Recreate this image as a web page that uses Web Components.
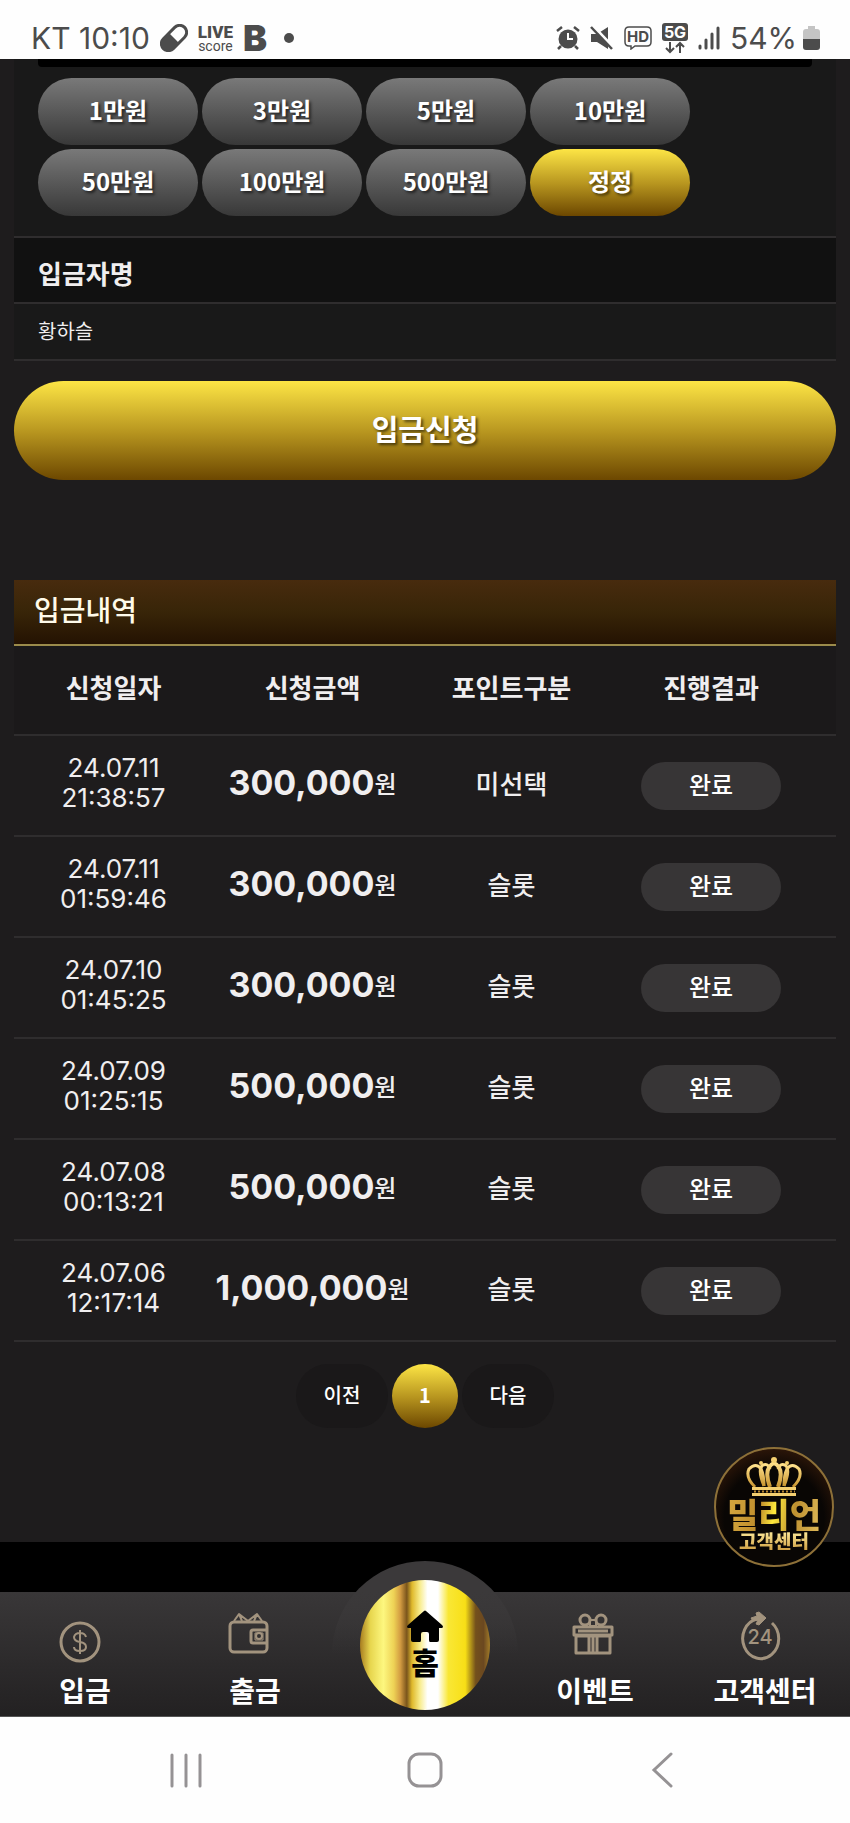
<!DOCTYPE html>
<html lang="ko">
<head>
<meta charset="utf-8">
<meta name="viewport" content="width=device-width, initial-scale=1">
<title>입금신청</title>
<style>
  :root {
    --font-kr: "Noto Sans CJK KR", sans-serif;
    --font-system: Inter, Roboto, sans-serif;
    --bg: #1e1c1d;
    --panel: #191919;
    --line: #2f2d2e;
    --gold: linear-gradient(#fde545, #b7951f 52%, #6c4700);
    --shadow: 2px 2px 3px #0009;
    --side: 14px;
  }

  body {
    margin: 0;
    background: #fefefe;
    font-family: var(--font-kr);
    color: #f0eeef;
  }
</style>
</head>
<body>
<app-screen>
  <status-bar slot="top"></status-bar>

  <deposit-form name="황하슬">
    <amount-chip>1만원</amount-chip>
    <amount-chip>3만원</amount-chip>
    <amount-chip>5만원</amount-chip>
    <amount-chip>10만원</amount-chip>
    <amount-chip>50만원</amount-chip>
    <amount-chip>100만원</amount-chip>
    <amount-chip>500만원</amount-chip>
    <amount-chip gold>정정</amount-chip>
  </deposit-form>
  <deposit-history></deposit-history>
  <page-nav></page-nav>

  <support-badge slot="float"></support-badge>
  <tab-bar slot="bottom">
    <tab-item icon="coin">입금</tab-item>
    <tab-item icon="wallet">출금</tab-item>
    <home-tab>홈</home-tab>
    <tab-item icon="gift">이벤트</tab-item>
    <tab-item icon="support">고객센터</tab-item>
  </tab-bar>
  <system-nav slot="bottom"></system-nav>
</app-screen>

<script>
class BaseElement extends HTMLElement {
  constructor() {
    super();
    this.attachShadow({ mode: "open" });
  }

  connectedCallback() {
    this.shadowRoot.innerHTML = `<style>
      * { box-sizing: border-box; }
      button, input { font-family: inherit; color: inherit; border: 0; margin: 0; padding: 0; }
      svg { display: block; }
      ${this.constructor.styles}
    </style>${this.render()}`;
  }
}

class AppScreen extends BaseElement {
  static get styles() {
    return /* css */`
      :host {
        display: flex;
        flex-direction: column;
        min-height: 100vh;
        position: relative;
      }

      main {
        flex: 1;
        background: var(--bg);
        padding: 0 var(--side) 114px;
      }

      .gap {
        height: 50px;
        background: #000;
      }
    `;
  }

  render() {
    return /* html */`
      <slot name="top"></slot>
      <main><slot></slot></main>
      <div class="gap"></div>
      <slot name="bottom"></slot>
      <slot name="float"></slot>`;
  }
}

class StatusBar extends BaseElement {
  static get styles() {
    return /* css */`
      :host {
        display: flex;
        justify-content: space-between;
        height: 59px;
        padding: 16px 30px 0 31px;
        box-sizing: border-box;
        background: #fefefe;
        color: #4c4c4c;
        font: 400 30px/42px var(--font-system);
      }

      .group {
        display: flex;
        align-items: center;
        gap: 10px;
      }

      .battery {
        display: flex;
        align-items: center;
        gap: 6px;
      }

      .live {
        font: 900 17px/16px Roboto, sans-serif;
        text-align: center;

        & small {
          display: block;
          font: 400 14px/12px Roboto, sans-serif;
        }
      }

      .b {
        font: 900 36px/42px Inter, sans-serif;
      }

      .dot {
        width: 10px;
        height: 10px;
        border-radius: 50%;
        background: currentColor;
        margin-left: 7px;
      }

      svg text {
        font-family: Inter, sans-serif;
        font-weight: 700;
      }
    `;
  }

  render() {
    return /* html */`
      <div class="group">
        <span>KT 10:10</span>
        <svg width="28" height="28" viewBox="0 0 28 28" aria-hidden="true">
          <g transform="rotate(-45 14 14)">
            <rect x="-1" y="7" width="30" height="14" rx="7" fill="none" stroke="#4c4c4c" stroke-width="3"/>
            <path d="M14 7H6a7 7 0 0 0 0 14h8z" fill="#4c4c4c"/>
          </g>
        </svg>
        <span class="live">LIVE<small>score</small></span>
        <span class="b">B</span>
        <span class="dot"></span>
      </div>
      <div class="group">
        <svg width="24" height="24" viewBox="0 0 24 24" fill="none" stroke="#4c4c4c" aria-hidden="true">
          <circle cx="12" cy="13" r="9.500" fill="#4c4c4c" stroke="none"/>
          <path d="M1 5l5-4M23 5l-5-4M5 20l-3 3M19 20l3 3" stroke-width="2.500"/>
          <path d="M12 7v6h5" stroke="#fff" stroke-width="2"/>
        </svg>
        <svg width="24" height="24" viewBox="0 0 24 24" aria-hidden="true">
          <path d="M1 8h6L18 1v22L7 16H1z" fill="#4c4c4c"/>
          <path d="M4 1l20 21" stroke="#fefefe" stroke-width="3"/>
          <path d="M1 1l21 22" stroke="#4c4c4c" stroke-width="2.500"/>
        </svg>
        <svg width="28" height="24" viewBox="0 0 28 24" aria-hidden="true">
          <path d="M5 1h18q4 0 4 4v11q0 4-4 4H11l-4 3v-3H5q-4 0-4-4V5q0-4 4-4z" fill="none" stroke="#4c4c4c" stroke-width="1.500"/>
          <text x="14" y="16" font-size="15" text-anchor="middle" fill="#4c4c4c">HD</text>
        </svg>
        <svg width="26" height="32" viewBox="0 0 26 32" aria-hidden="true">
          <rect width="26" height="18" rx="3" fill="#4c4c4c" y="1"/>
          <text x="13" y="16" font-size="16" text-anchor="middle" fill="#fff">5G</text>
          <path d="M8 20v10M4 26l4 4 4-4M18 31V21M14 25l4-4 4 4" fill="none" stroke="#4c4c4c" stroke-width="2"/>
        </svg>
        <svg width="22" height="24" viewBox="0 0 22 24" stroke="#4c4c4c" stroke-width="3" stroke-linecap="round" aria-hidden="true">
          <path d="M2 20v2M8 14v8M14 8v14M20 2v20"/>
        </svg>
        <div class="battery">
          <span>54%</span>
          <svg width="17" height="26" viewBox="0 0 17 26" aria-hidden="true">
            <path d="M5 1h7v3h2q3 0 3 3v7H0V7q0-3 3-3h2z" fill="#c4c4c4"/>
            <path d="M0 14h17v8q0 3-3 3H3q-3 0-3-3z" fill="#4c4c4c"/>
          </svg>
        </div>
      </div>`;
  }
}

class AmountChip extends BaseElement {
  static get styles() {
    return /* css */`
      :host {
        display: block;
      }

      button {
        width: 100%;
        height: 67px;
        border-radius: 34px;
        padding-bottom: 4px;
        background: linear-gradient(#797979, #383838);
        color: #fff;
        font-size: 24px;
        font-weight: 700;
        line-height: 32px;
        text-shadow: var(--shadow);
      }

      :host([gold]) button {
        background: var(--gold);
      }
    `;
  }

  render() {
    return /* html */`<button type="button"><slot></slot></button>`;
  }
}

class DepositForm extends BaseElement {
  static get styles() {
    return /* css */`
      :host {
        display: block;
      }

      .panel {
        background: var(--panel);
        border-bottom: 2px solid var(--line);
      }

      .amounts {
        padding: 0 24px 20px;
      }

      .field {
        height: 8px;
        border-radius: 0 0 4px 4px;
        background: #000;
      }

      .chips {
        display: grid;
        grid-template-columns: repeat(4, minmax(0, 160px));
        gap: 4px;
        margin-top: 11px;
      }

      label {
        display: block;
        padding: 17px 24px 11px;
        background: #111;
        font-size: 26px;
        font-weight: 700;
        line-height: 36px;
      }

      input {
        display: block;
        width: 100%;
        height: 55px;
        padding: 0 24px 2px;
        background: none;
        font-size: 20px;
      }

      .submit {
        display: block;
        width: 100%;
        height: 99px;
        margin-top: 20px;
        padding-bottom: 6px;
        border-radius: 50px;
        background: var(--gold);
        color: #fff;
        font-size: 29px;
        font-weight: 700;
        text-shadow: var(--shadow);
      }
    `;
  }

  render() {
    return /* html */`
      <form>
        <div class="panel amounts">
          <div class="field"></div>
          <div class="chips"><slot></slot></div>
        </div>
        <div class="panel"><label for="name">입금자명</label></div>
        <div class="panel"><input id="name" value="${this.getAttribute("name")}"></div>
        <button class="submit" type="button">입금신청</button>
      </form>`;
  }
}

const deposits = [
  ["24.07.11", "21:38:57", "300,000", "미선택"],
  ["24.07.11", "01:59:46", "300,000", "슬롯"],
  ["24.07.10", "01:45:25", "300,000", "슬롯"],
  ["24.07.09", "01:25:15", "500,000", "슬롯"],
  ["24.07.08", "00:13:21", "500,000", "슬롯"],
  ["24.07.06", "12:17:14", "1,000,000", "슬롯"],
];

class DepositHistory extends BaseElement {
  static get styles() {
    return /* css */`
      :host {
        display: block;
        margin-top: 100px;
      }

      h2 {
        margin: 0;
        padding: 9px 20px 15px;
        background: linear-gradient(#482b0e, #382508 50%, #241202);
        border-bottom: 2px solid #9b8b4b;
        color: #fffbea;
        font-size: 28px;
        font-weight: 500;
        line-height: 40px;
      }

      table {
        width: 100%;
        border-collapse: collapse;
        table-layout: fixed;
        font-size: 26px;
      }

      th, td {
        padding: 0;
        border-bottom: 2px solid var(--line);
        text-align: center;
        font-weight: 500;
      }

      th {
        height: 89px;
        padding-bottom: 8px;
        background: #1b191a;
        font-weight: 700;
      }

      td {
        height: 101px;
        padding-bottom: 6px;
        line-height: 36px;
      }

      /* the last column also takes the right gutter of the table */
      th:last-child, td:last-child {
        width: 225px;
        padding-right: 25px;
      }

      td:last-child {
        padding-bottom: 0;
      }

      time {
        font-family: Inter, sans-serif;
        font-size: 26px;
        font-weight: 400;
        line-height: 30px;
      }

      time span {
        display: block;
      }

      .amount {
        display: flex;
        justify-content: center;
        align-items: center;
        font-size: 24px;
        white-space: nowrap;
      }

      b {
        font-family: Inter, sans-serif;
        font-size: 34px;
      }

      .state {
        display: inline-block;
        width: 140px;
        padding: 4px 0 8px;
        border-radius: 24px;
        background: #373536;
        color: #fff;
        font-size: 24px;
        vertical-align: middle;
      }
    `;
  }

  render() {
    const rows = deposits.map(([date, hour, amount, point]) => `
      <tr>
        <td><time><span>${date}</span><span>${hour}</span></time></td>
        <td><div class="amount"><b>${amount}</b><span>원</span></div></td>
        <td>${point}</td>
        <td><span class="state">완료</span></td>
      </tr>`).join("");

    return /* html */`
      <h2>입금내역</h2>
      <table>
        <thead>
          <tr><th>신청일자</th><th>신청금액</th><th>포인트구분</th><th>진행결과</th></tr>
        </thead>
        <tbody>${rows}</tbody>
      </table>`;
  }
}

class PageNav extends BaseElement {
  static get styles() {
    return /* css */`
      :host {
        display: block;
        margin-top: 22px;
      }

      nav {
        display: flex;
        justify-content: center;
        gap: 4px;
      }

      button {
        width: 92px;
        height: 64px;
        padding-bottom: 3px;
        border-radius: 32px;
        background: #1a1819;
        color: #fff;
        font-size: 20px;
        font-weight: 500;
      }

      .current {
        width: 66px;
        border-radius: 50%;
        background: var(--gold);
        font-weight: 700;
      }
    `;
  }

  render() {
    return /* html */`
      <nav>
        <button type="button">이전</button>
        <button type="button" class="current" aria-current="page">1</button>
        <button type="button">다음</button>
      </nav>`;
  }
}

class SupportBadge extends BaseElement {
  static get styles() {
    return /* css */`
      :host {
        display: block;
        position: absolute;
        right: 16px;
        bottom: 256px;
      }

      button {
        display: flex;
        flex-direction: column;
        align-items: center;
        width: 120px;
        height: 120px;
        padding-top: 8px;
        border: 2px solid #8d7038;
        border-radius: 50%;
        background: radial-gradient(circle at 50% 60%, #090604 55%, #281408 75%, #5c3512);
      }

      .name, .desc {
        white-space: nowrap;
        font-weight: 900;
        color: transparent;
        background: linear-gradient(100deg, #d5a840, #c08e2c 35%, #ffe93c 50%, #bd8f30 70%, #e0bb5a);
        -webkit-background-clip: text;
        background-clip: text;
      }

      .name {
        font-size: 34px;
        line-height: 34px;
      }

      .desc {
        font-size: 19px;
        line-height: 19px;
        background-image: linear-gradient(#ffeb9c, #d0a144);
      }
    `;
  }

  render() {
    return /* html */`
      <button type="button">
        <svg width="56" height="40" viewBox="0 0 56 40" fill="none" stroke="url(#g)" stroke-width="3" aria-hidden="true">
          <defs>
            <linearGradient id="g" x1="0" y1="0" x2="0" y2="1">
              <stop offset="0" stop-color="#ffe08a"/>
              <stop offset="1" stop-color="#c8942f"/>
            </linearGradient>
          </defs>
          <path d="M9 30Q-1 20 3 12Q10 5 15 12Q18 18 18 29"/>
          <path d="M47 30Q57 20 53 12Q46 5 41 12Q38 18 38 29"/>
          <path d="M18 29Q11 12 17 8Q22 6 24 12"/>
          <path d="M38 29Q45 12 39 8Q34 6 32 12"/>
          <path d="M24 30Q17 11 28 6Q39 11 32 30" stroke-width="4"/>
          <g fill="#f4cf70" stroke="none">
            <circle cx="28" cy="3" r="3"/><circle cx="15" cy="6" r="2"/><circle cx="41" cy="6" r="2"/>
            <path d="M6 30h44v3H6zM6 36h44v3H6z"/>
          </g>
          <path d="M8 34.500h41" stroke="#b78630" stroke-dasharray="2 2" stroke-width="2"/>
        </svg>
        <span class="name">밀리언</span>
        <span class="desc">고객센터</span>
      </button>`;
  }
}

const icons = {
  coin: /* html */`
    <circle cx="25" cy="32" r="19" stroke-width="3"/>
    <path d="M31 27q-1-4-6-4t-6 4q0 4 6 5t6 5q0 4-6 4t-6-4M25 20v24" stroke-width="2"/>`,
  wallet: /* html */`
    <rect x="5" y="12" width="37" height="30" rx="4" stroke-width="3"/>
    <path d="M9 11l5-7 9 7 9-7 5 7M14 4l3 7M32 4l-3 7" stroke-width="2"/>
    <path d="M41 20H28q-2 0-2 2v9q0 2 2 2h13" stroke-width="3"/>
    <circle cx="34" cy="26" r="3" stroke-width="2"/><path d="M30 23v7h8v-7z" stroke-width="1"/>`,
  gift: /* html */`
    <path d="M11 26h34v17H11zM24 26v17M28 26v17M32 26v17M13 21h30" stroke-width="3"/>
    <path d="M9 17h38v8H9z" stroke-width="3"/>
    <circle cx="20" cy="10" r="5" stroke-width="3"/>
    <circle cx="36" cy="10" r="5" stroke-width="3"/>
    <path d="M25 10h6v6h-6z" stroke-width="2"/>`,
  support: /* html */`
    <path d="M37 13A18 20 0 1 1 22 9" stroke-width="3"/>
    <path d="M21 3l3-1 7 6-7 7-3-1 2-4-5 1-2-3 6-2z" fill="#a2937e" stroke-width="1"/>
    <text x="25" y="34" text-anchor="middle" font-size="20" font-weight="500" font-family="Inter, sans-serif" fill="#a2937e" stroke="none">24</text>`,
};

class TabBar extends BaseElement {
  static get styles() {
    return /* css */`
      :host {
        display: block;
        position: relative;
        border-bottom: 1px solid #555;
        background: linear-gradient(#393738, #232122);
      }

      nav {
        display: grid;
        grid-template-columns: repeat(5, 1fr);
        height: 124px;
      }
    `;
  }

  render() {
    return /* html */`<nav><slot></slot></nav>`;
  }
}

class TabItem extends BaseElement {
  static get styles() {
    return /* css */`
      :host {
        display: block;
      }

      a {
        display: flex;
        flex-direction: column;
        align-items: center;
        padding-top: 18px;
        color: #fff;
        font-size: 28px;
        font-weight: 700;
        line-height: 40px;
        text-decoration: none;
        white-space: nowrap;
      }
    `;
  }

  render() {
    return /* html */`
      <a href="#">
        <svg width="60" height="60" viewBox="0 0 60 60" fill="none" stroke="#a2937e" stroke-linejoin="round" aria-hidden="true">${icons[this.getAttribute("icon")]}</svg>
        <slot></slot>
      </a>`;
  }
}

class HomeTab extends BaseElement {
  static get styles() {
    return /* css */`
      :host {
        display: flex;
        justify-content: center;
        position: relative;
      }

      .dome {
        position: absolute;
        bottom: 0;
        width: 186px;
        height: 155px;
        border-radius: 93px 93px 0 0;
        background: linear-gradient(#3b393a 20%, #3b393a00 60%);
      }

      a {
        position: absolute;
        bottom: 6px;
        display: flex;
        flex-direction: column;
        align-items: center;
        width: 130px;
        height: 130px;
        padding-top: 30px;
        border-radius: 50%;
        background: linear-gradient(90deg, #a87d20, #e7d64e 8%, #fdf77f 18%, #eed255 26%, #d39c42 31%, #7a551b 36%, #dfb92c 40%, #f8ec8b 46%, #fff 52%, #fff 60%, #f9e735 68%, #f8df16 81%, #73501c 89%, #6b4820 95%, #a27c28);
        color: #000;
        font-size: 30px;
        font-weight: 900;
        line-height: 38px;
        text-decoration: none;
      }
    `;
  }

  render() {
    return /* html */`
      <div class="dome"></div>
      <a href="#">
        <svg width="36" height="32" viewBox="0 0 36 32" aria-hidden="true">
          <path d="M17 1q1-1 2 0l16 14q2 2 0 3h-3v12q0 2-2 2h-7q-1 0-1-2v-6q0-2-2-2h-4q-2 0-2 2v6q0 2-1 2H6q-2 0-2-2V18H1q-2-1 0-3z"/>
        </svg>
        <slot></slot>
      </a>`;
  }
}

class SystemNav extends BaseElement {
  static get styles() {
    return /* css */`
      :host {
        display: block;
        padding: 0 8%;
        background: #fefefe;
      }

      nav {
        display: grid;
        grid-template-columns: repeat(3, 1fr);
        height: 106px;
      }

      button {
        display: grid;
        place-items: center;
        background: none;
      }
    `;
  }

  render() {
    const svg = (shape) => `<svg width="36" height="36" viewBox="0 0 36 36" fill="none" stroke="#959294" stroke-width="3" stroke-linecap="round">${shape}</svg>`;

    return /* html */`
      <nav>
        <button type="button" aria-label="최근 앱">${svg('<path d="M3 3v31M17 3v31M31 3v31"/>')}</button>
        <button type="button" aria-label="홈 화면">${svg('<rect x="2" y="2" width="32" height="32" rx="10"/>')}</button>
        <button type="button" aria-label="뒤로">${svg('<path d="M26 2L9 18l17 16"/>')}</button>
      </nav>`;
  }
}

customElements.define("app-screen", AppScreen);
customElements.define("status-bar", StatusBar);
customElements.define("amount-chip", AmountChip);
customElements.define("deposit-form", DepositForm);
customElements.define("deposit-history", DepositHistory);
customElements.define("page-nav", PageNav);
customElements.define("support-badge", SupportBadge);
customElements.define("tab-bar", TabBar);
customElements.define("tab-item", TabItem);
customElements.define("home-tab", HomeTab);
customElements.define("system-nav", SystemNav);
</script>
</body>
</html>
